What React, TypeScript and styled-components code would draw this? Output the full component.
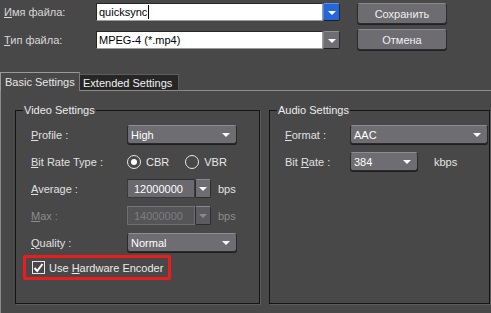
import React from 'react';
import styled, { createGlobalStyle } from 'styled-components';

const Global = createGlobalStyle`
  html, body { margin: 0; padding: 0; background: #484848; }
  body {
    font-family: "Liberation Sans", Arial, sans-serif;
    font-size: 11px;
    color: #e2e2e2;
    white-space: nowrap;
  }
  #root { width: 491px; height: 313px; overflow: hidden; }
  * { box-sizing: border-box; }
`;

const Window = styled.div`
  width: 491px;
  height: 313px;
  display: flex;
  flex-direction: column;
  background: #484848;
`;

const Header = styled.div`
  display: flex;
  height: 72px;
  padding: 3px 0 0 4px;
`;

const FieldColumn = styled.div`
  display: flex;
  flex-direction: column;
  gap: 10px;
`;

const FieldRow = styled.div`
  display: flex;
  align-items: center;
  height: 18px;
`;

const FieldLabel = styled.div`
  width: 92px;
  color: #d8d8d8;
  font-size: 11px;
`;

const TextBox = styled.div`
  width: 227px;
  height: 18px;
  background: #ffffff;
  color: #000;
  font-size: 11px;
  padding-left: 2px;
  border-top: 1px solid #262626;
  border-left: 1px solid #262626;
  border-bottom: 1px solid #9c9c9c;
  border-right: 1px solid #9c9c9c;
  display: flex;
  align-items: center;
`;

const Caret = styled.span`
  display: inline-block;
  width: 1px;
  height: 14px;
  background: #000;
  margin-left: 1px;
`;

const DropButton = styled.div<{ $blue?: boolean }>`
  width: 17px;
  height: 18px;
  display: flex;
  align-items: center;
  justify-content: center;
  border-radius: 2px;
  background: ${(p) => (p.$blue ? '#2467d8' : '#6e6d72')};
  border-top: 1px solid ${(p) => (p.$blue ? '#5a92ee' : '#8e8e92')};
  border-left: 1px solid ${(p) => (p.$blue ? '#4a85e6' : '#858589')};
  border-bottom: 1px solid #1e1e1e;
  border-right: 1px solid #2a2a2a;
`;

const Arrow = styled.span<{ $dim?: boolean }>`
  display: block;
  width: 0;
  height: 0;
  border-left: 4px solid transparent;
  border-right: 4px solid transparent;
  border-top: 4px solid ${(p) => (p.$dim ? '#8a8a8a' : '#ffffff')};
  margin-top: 1px;
`;

const ButtonColumn = styled.div`
  display: flex;
  flex-direction: column;
  gap: 5px;
  margin-left: 17px;
`;

const Button = styled.div`
  width: 90px;
  height: 21px;
  display: flex;
  align-items: center;
  justify-content: center;
  background: #6d6c71;
  color: #f0f0f0;
  font-size: 11px;
  border-radius: 3px;
  border: 1px solid #2c2c2c;
  border-top-color: #8a8a8e;
  box-shadow: 0 1px 0 #222;
`;

const TabStrip = styled.div`
  display: flex;
  align-items: flex-end;
  height: 19px;
`;

const Tab = styled.div<{ $active?: boolean }>`
  display: flex;
  align-items: center;
  height: ${(p) => (p.$active ? '19px' : '17px')};
  width: ${(p) => (p.$active ? '80px' : '99px')};
  padding-left: ${(p) => (p.$active ? '4px' : '3px')};
  background: ${(p) => (p.$active ? '#484848' : '#262626')};
  color: ${(p) => (p.$active ? '#e6e6e6' : '#f2f2f2')};
  font-size: 11px;
  border-top: 1px solid ${(p) => (p.$active ? '#9a9a9a' : '#5e5e5e')};
  border-left: ${(p) => (p.$active ? '1px solid #9a9a9a' : 'none')};
  border-right: 1px solid ${(p) => (p.$active ? '#7a7a7a' : '#5a5a5a')};
  border-bottom: ${(p) => (p.$active ? 'none' : '1px solid #8c8c8c')};
`;

const TabFill = styled.div`
  flex: 1;
  border-bottom: 1px solid #8c8c8c;
`;

const TabPanel = styled.div`
  flex: 1;
  display: flex;
  gap: 9px;
  padding: 19px 1px 0 14px;
  border-left: 1px solid #8c8c8c;
`;

const GroupBox = styled.div<{ $width?: number }>`
  position: relative;
  ${(p) => (p.$width ? `width: ${p.$width}px;` : 'flex: 1;')}
  height: 194px;
  border: 1px solid #141414;
  box-shadow: 1px 1px 0 #5c5c5c;
  padding: 14px 0 0 15px;
`;

const GroupTitle = styled.div`
  position: absolute;
  top: -8px;
  left: 7px;
  padding: 0 1px;
  background: #484848;
  color: #ececec;
  font-size: 11px;
  line-height: 14px;
`;

const FormGrid = styled.div<{ $labelWidth: number }>`
  display: grid;
  grid-template-columns: ${(p) => p.$labelWidth}px auto;
  grid-auto-rows: 19px;
  row-gap: 8px;
  align-items: center;
`;

const Label = styled.div<{ $disabled?: boolean }>`
  color: ${(p) => (p.$disabled ? '#8c8c8c' : '#e0e0e0')};
  font-size: 11px;
`;

const Select = styled.div<{ $width: number }>`
  width: ${(p) => p.$width}px;
  height: 19px;
  display: flex;
  align-items: center;
  justify-content: space-between;
  padding: 0 6px 0 3px;
  background: #6e6d72;
  color: #ffffff;
  font-size: 11px;
  border-radius: 3px;
  border: 1px solid #2a2a2a;
  border-top-color: #8e8e92;
  box-shadow: 0 1px 0 #1e1e1e;
`;

const Inline = styled.div<{ $gap: number }>`
  display: flex;
  align-items: center;
  gap: ${(p) => p.$gap}px;
`;

const RadioOption = styled.div`
  display: flex;
  align-items: center;
  gap: 5px;
  color: #e8e8e8;
  font-size: 11px;
`;

const RadioCircle = styled.span<{ $checked?: boolean }>`
  width: 14px;
  height: 14px;
  border-radius: 50%;
  border: 1.5px solid #e6e6e6;
  display: flex;
  align-items: center;
  justify-content: center;
  &::after {
    content: '';
    display: ${(p) => (p.$checked ? 'block' : 'none')};
    width: 6px;
    height: 6px;
    border-radius: 50%;
    background: #ffffff;
  }
`;

const Combo = styled.div`
  display: flex;
  align-items: center;
`;

const ComboInput = styled.div<{ $disabled?: boolean }>`
  width: 68px;
  height: 19px;
  display: flex;
  align-items: center;
  padding-left: 6px;
  background: ${(p) => (p.$disabled ? '#555457' : '#6a696e')};
  color: ${(p) => (p.$disabled ? '#7e7e80' : '#ffffff')};
  font-size: 11px;
  border: 1px solid ${(p) => (p.$disabled ? '#6e6e70' : '#3a3a3a')};
  border-top-color: ${(p) => (p.$disabled ? '#747476' : '#2e2e2e')};
`;

const ComboButton = styled.div<{ $disabled?: boolean }>`
  width: 16px;
  height: 19px;
  display: flex;
  align-items: center;
  justify-content: center;
  background: ${(p) => (p.$disabled ? '#5c5b5f' : '#6e6d72')};
  border: 1px solid #2c2c2c;
  border-top-color: #8a8a8e;
  border-radius: 2px;
`;

const Unit = styled.span<{ $disabled?: boolean }>`
  color: ${(p) => (p.$disabled ? '#8c8c8c' : '#e4e4e4')};
  font-size: 11px;
`;

const HighlightRow = styled.div`
  display: flex;
  align-items: center;
  gap: 4px;
  width: 148px;
  height: 25px;
  margin: 3px 0 0 -8px;
  padding-left: 6px;
  border: 3px solid #ea1c1c;
  border-radius: 2px;
  color: #ececec;
  font-size: 11px;
`;

const CheckBox = styled.span`
  width: 13px;
  height: 13px;
  border: 1.5px solid #e8e8e8;
  display: flex;
  align-items: center;
  justify-content: center;
`;

const App: React.FC = () => (
  <>
    <Global />
    <Window>
      <Header>
        <FieldColumn>
          <FieldRow>
            <FieldLabel><u>И</u>мя файла:</FieldLabel>
            <TextBox>quicksync<Caret /></TextBox>
            <DropButton $blue><Arrow /></DropButton>
          </FieldRow>
          <FieldRow>
            <FieldLabel><u>Т</u>ип файла:</FieldLabel>
            <TextBox>MPEG-4 (*.mp4)</TextBox>
            <DropButton><Arrow /></DropButton>
          </FieldRow>
        </FieldColumn>
        <ButtonColumn>
          <Button>Сохранить</Button>
          <Button>Отмена</Button>
        </ButtonColumn>
      </Header>
      <TabStrip>
        <Tab $active>Basic Settings</Tab>
        <Tab>Extended Settings</Tab>
        <TabFill />
      </TabStrip>
      <TabPanel>
        <GroupBox $width={245}>
          <GroupTitle>Video Settings</GroupTitle>
          <FormGrid $labelWidth={96}>
            <Label><u>P</u>rofile :</Label>
            <Select $width={110}>High<Arrow /></Select>
            <Label><u>B</u>it Rate Type :</Label>
            <Inline $gap={16}>
              <RadioOption><RadioCircle $checked />CBR</RadioOption>
              <RadioOption><RadioCircle />VBR</RadioOption>
            </Inline>
            <Label><u>A</u>verage :</Label>
            <Inline $gap={7}>
              <Combo>
                <ComboInput>12000000</ComboInput>
                <ComboButton><Arrow /></ComboButton>
              </Combo>
              <Unit>bps</Unit>
            </Inline>
            <Label $disabled><u>M</u>ax :</Label>
            <Inline $gap={7}>
              <Combo>
                <ComboInput $disabled>14000000</ComboInput>
                <ComboButton $disabled><Arrow $dim /></ComboButton>
              </Combo>
              <Unit $disabled>bps</Unit>
            </Inline>
            <Label><u>Q</u>uality :</Label>
            <Select $width={110}>Normal<Arrow /></Select>
          </FormGrid>
          <HighlightRow>
            <CheckBox>
              <svg width="11" height="10" viewBox="0 0 11 10">
                <path d="M1.5 5 L4.2 8 L9.5 1" fill="none" stroke="#ffffff" strokeWidth="2" />
              </svg>
            </CheckBox>
            <span>Use <u>H</u>ardware Encoder</span>
          </HighlightRow>
        </GroupBox>
        <GroupBox>
          <GroupTitle>Audio Settings</GroupTitle>
          <FormGrid $labelWidth={65}>
            <Label><u>F</u>ormat :</Label>
            <Select $width={138}>AAC<Arrow /></Select>
            <Label>Bit <u>R</u>ate :</Label>
            <Inline $gap={16}>
              <Select $width={68}>384<Arrow /></Select>
              <Unit>kbps</Unit>
            </Inline>
          </FormGrid>
        </GroupBox>
      </TabPanel>
    </Window>
  </>
);

export default App;
